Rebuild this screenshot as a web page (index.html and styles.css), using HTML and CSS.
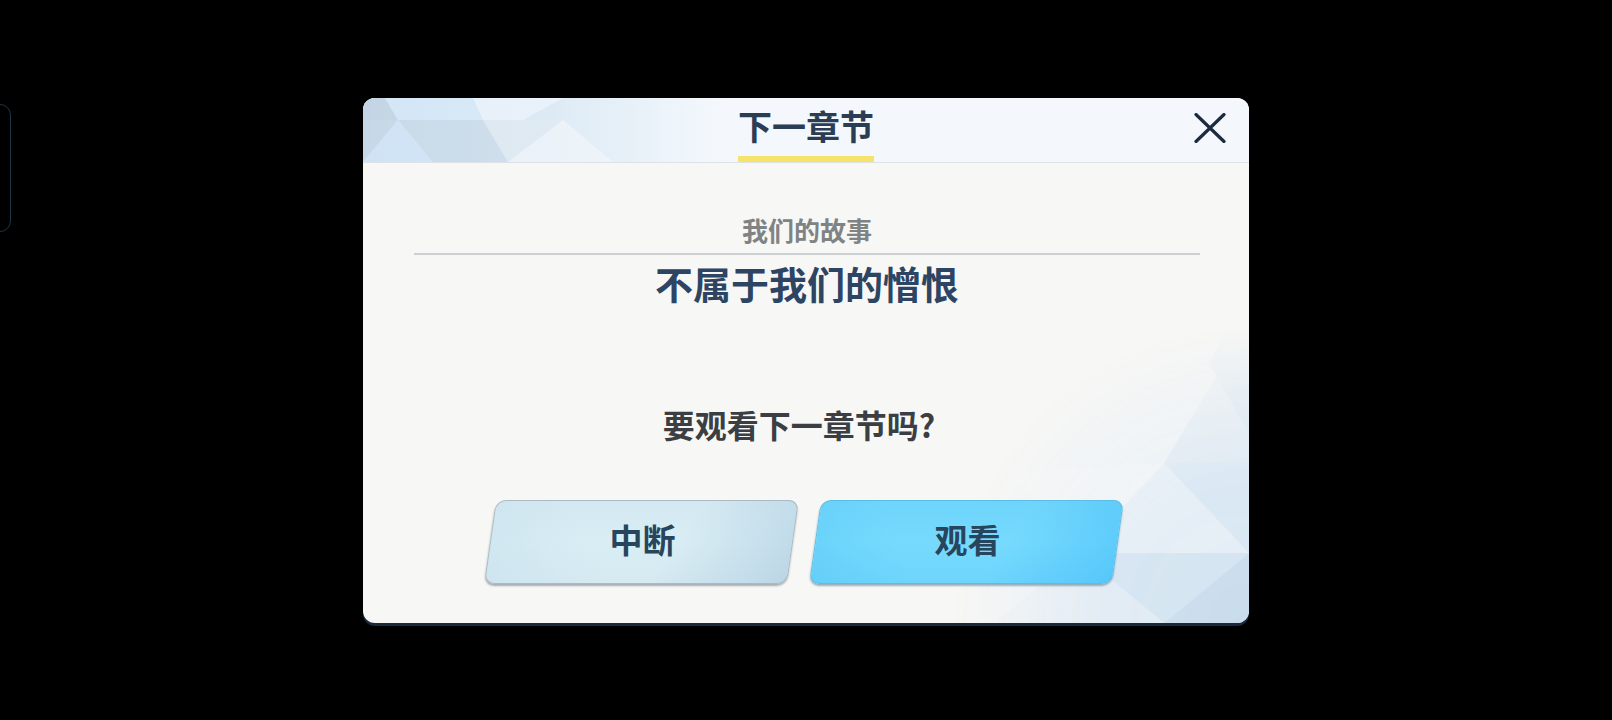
FILE: index.html
```html
<!DOCTYPE html>
<html lang="zh-CN">
<head>
<meta charset="utf-8">
<title>下一章节</title>
<link rel="stylesheet" href="styles.css">
</head>
<body>
<div class="side-tab"></div>
<div class="dialog">
  <svg class="deco-br" width="300" height="300" viewBox="0 0 300 300" aria-hidden="true">
    <rect x="0" y="0" width="300" height="300" fill="#e9f1f7"/>
    <polygon points="215,140 300,0 300,140" fill="#dbe8f3"/>
    <polygon points="260,40 300,-30 300,110" fill="#d0e2f0"/>
    <polygon points="130,230 215,140 300,230" fill="#e3edf6"/>
    <polygon points="215,140 300,230 300,140" fill="#d6e6f3"/>
    <polygon points="130,230 215,300 45,300" fill="#dfeaf4"/>
    <polygon points="130,230 300,230 215,300" fill="#d2e3f1"/>
    <polygon points="215,300 300,230 300,300" fill="#c9dcec"/>
    <polygon points="60,150 215,140 130,230" fill="#edf3f8"/>
    <polygon points="45,300 130,230 0,230" fill="#e8f0f7"/>
  </svg>

  <header class="dlg-head">
    <svg class="deco-head" width="360" height="64" viewBox="0 0 360 64" aria-hidden="true">
      <defs>
        <linearGradient id="fadeHead" x1="0" y1="0" x2="1" y2="0">
          <stop offset="0" stop-color="#f4f8fc" stop-opacity="0"/>
          <stop offset="0.5" stop-color="#f4f8fc" stop-opacity="0.2"/>
          <stop offset="1" stop-color="#f4f8fc" stop-opacity="1"/>
        </linearGradient>
      </defs>
      <rect x="0" y="0" width="360" height="64" fill="#d6e6f3"/>
      <polygon points="0,0 22,0 35,22 0,22" fill="#c3d5e4"/>
      <polygon points="22,0 110,0 120,22 35,22" fill="#d3e6f6"/>
      <polygon points="110,0 200,0 160,22 120,22" fill="#e6f0f9"/>
      <polygon points="0,22 35,22 0,64" fill="#c6d8e7"/>
      <polygon points="35,22 70,64 0,64" fill="#cfe3f5"/>
      <polygon points="35,22 120,22 145,64 70,64" fill="#c7d9e8"/>
      <polygon points="120,22 200,22 145,64" fill="#dae6f0"/>
      <polygon points="145,64 200,22 250,64" fill="#e8f0f7"/>
      <rect x="0" y="0" width="360" height="64" fill="url(#fadeHead)"/>
    </svg>
    <div class="head-title">
      <span class="head-text">下一章节</span>
      <i class="head-bar"></i>
    </div>
    <button class="close" aria-label="关闭">
      <svg width="32" height="30" viewBox="0 0 32 30">
        <path d="M2 1.5 L30 28.5 M30 1.5 L2 28.5" stroke="#1c2b40" stroke-width="3.2" stroke-linecap="round" fill="none"/>
      </svg>
    </button>
  </header>

  <div class="dlg-body">
    <div class="sub">我们的故事</div>
    <div class="sep"></div>
    <div class="chapter">不属于我们的憎恨</div>
    <div class="question">要观看下一章节吗?</div>
    <div class="actions">
      <button class="btn btn-cancel"><span class="btn-label">中断</span></button>
      <button class="btn btn-watch"><span class="btn-label">观看</span></button>
    </div>
  </div>
</div>
</body>
</html>
```

FILE: styles.css
```css
* { box-sizing: border-box; }

html, body {
  margin: 0;
  padding: 0;
  background: #000;
}

body {
  width: 1612px;
  height: 720px;
  display: flex;
  align-items: center;
  justify-content: center;
  position: relative;
  overflow: hidden;
  font-family: "Noto Sans CJK SC", "Noto Sans", sans-serif;
  font-weight: 700;
}

.side-tab {
  position: absolute;
  left: -14px;
  top: 104px;
  width: 25px;
  height: 128px;
  border: 1.5px solid #1d3842;
  border-radius: 11px;
}

.dialog {
  position: relative;
  width: 886px;
  height: 525px;
  background: #f7f7f5;
  border-radius: 12px;
  overflow: hidden;
  box-shadow: 0 3px 0 #1a2a3b;
  display: flex;
  flex-direction: column;
}

.deco-br {
  position: absolute;
  right: 0;
  bottom: 0;
  display: block;
  -webkit-mask-image: radial-gradient(circle farthest-corner at 100% 100%, #000 0%, rgba(0,0,0,0.85) 35%, rgba(0,0,0,0.4) 55%, transparent 70%);
  mask-image: radial-gradient(circle farthest-corner at 100% 100%, #000 0%, rgba(0,0,0,0.85) 35%, rgba(0,0,0,0.4) 55%, transparent 70%);
}

.dlg-head {
  position: relative;
  height: 65px;
  flex: none;
  background: #f4f8fc;
  border-bottom: 1px solid #dde2e6;
  display: flex;
  justify-content: center;
}

.deco-head {
  position: absolute;
  left: 0;
  top: 0;
  display: block;
}

.head-title {
  position: relative;
  display: flex;
  flex-direction: column;
  align-items: stretch;
  padding-top: 8px;
  gap: 10px;
}

.head-text {
  font-size: 34px;
  line-height: 40px;
  color: #2b3d55;
}

.head-bar {
  display: block;
  height: 6px;
  background: #f6e36b;
}

.close {
  position: absolute;
  right: 23px;
  top: 15px;
  width: 32px;
  height: 30px;
  padding: 0;
  border: 0;
  background: transparent;
}

.close svg { display: block; }

.dlg-body {
  position: relative;
  flex: 1;
  display: flex;
  flex-direction: column;
  align-items: center;
  padding: 52px 49px 0 51px;
}

.sub {
  font-size: 26px;
  line-height: 30px;
  color: #808384;
}

.sep {
  align-self: stretch;
  height: 2px;
  margin-top: 8px;
  background: #cdd0d2;
}

.chapter {
  margin-top: 6px;
  font-size: 38px;
  line-height: 44px;
  color: #2d4463;
}

.question {
  margin-top: 101px;
  margin-right: 16px;
  font-size: 32px;
  line-height: 36px;
  color: #3b3e42;
}

.actions {
  margin-top: 58px;
  display: flex;
  gap: 22px;
  padding-right: 7px;
}

.btn {
  width: 303px;
  height: 84px;
  padding: 0;
  border-radius: 10px;
  transform: skewX(-8.1deg);
  display: flex;
  align-items: center;
  justify-content: center;
  font-family: inherit;
  font-weight: 700;
  cursor: pointer;
}

.btn-label {
  display: block;
  transform: skewX(8.1deg);
  font-size: 33px;
  line-height: 40px;
  color: #27465e;
  margin-top: -7px;
}

.btn-cancel {
  border: 1px solid #a9bac4;
  background:
    linear-gradient(120deg, rgba(255,255,255,0) 60%, rgba(180,210,228,0.55) 88%, rgba(170,200,220,0.6) 100%),
    linear-gradient(60deg, rgba(200,225,238,0.6) 0%, rgba(255,255,255,0) 35%),
    linear-gradient(180deg, #d3e8f1 0%, #d9edf4 50%, #d6eaf2 100%);
  box-shadow: 0 2px 2px rgba(70, 85, 95, 0.45);
}

.btn-watch {
  border: 1px solid #5bbde6;
  background:
    linear-gradient(120deg, rgba(255,255,255,0) 62%, rgba(70,190,250,0.6) 100%),
    linear-gradient(60deg, rgba(90,200,245,0.5) 0%, rgba(255,255,255,0) 30%),
    linear-gradient(180deg, #6fd4fb 0%, #76dafd 50%, #6fd5fc 100%);
  box-shadow: 0 2px 2px rgba(40, 90, 120, 0.45);
}
```
